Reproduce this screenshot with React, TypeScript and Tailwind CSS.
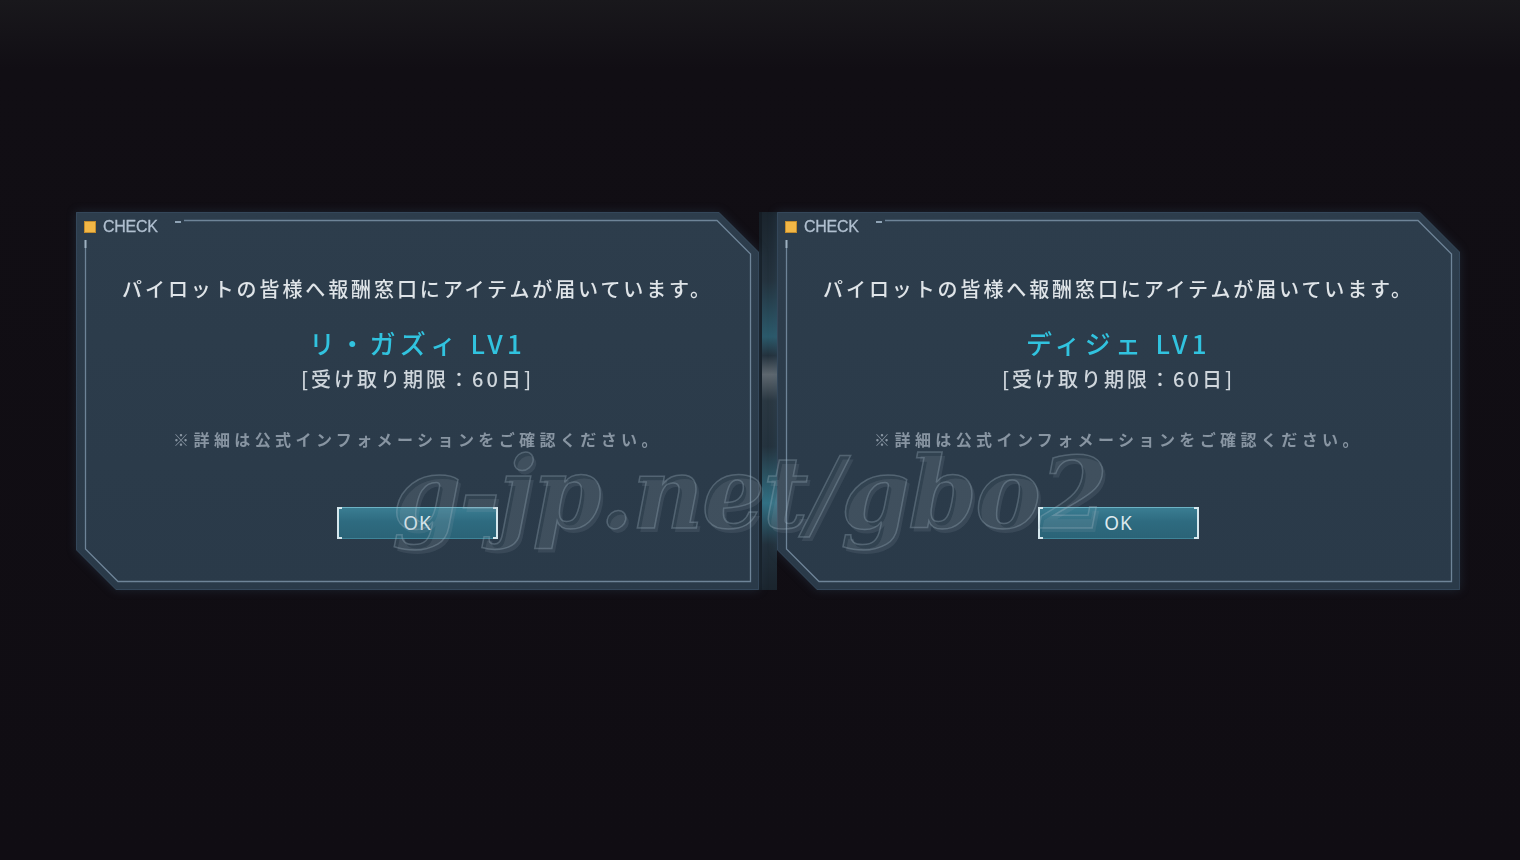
import React from "react";

const JP = "font-['Noto_Sans_CJK_JP','Noto_Sans',sans-serif]";

function Frame() {
  const W = 683;
  const H = 378;
  return (
    <svg
      className="absolute inset-0 pointer-events-none"
      width={W}
      height={H}
      viewBox={`0 0 ${W} ${H}`}
    >
      <polygon
        points={`0.5,0.5 ${W - 40},0.5 ${W - 0.5},40 ${W - 0.5},${H - 0.5} 40,${H - 0.5} 0.5,${H - 40}`}
        fill="none"
        stroke="#34475a"
        strokeWidth="1"
      />
      <polyline
        points={`108,8.5 ${W - 42},8.5 ${W - 8.5},42 ${W - 8.5},${H - 8.5} 42,${H - 8.5} 9.5,${H - 41} 9.5,36`}
        fill="none"
        stroke="#6e8498"
        strokeWidth="1.3"
      />
      <line x1="99" y1="10" x2="105" y2="10" stroke="#8fa3b5" strokeWidth="2" />
      <line x1="9.5" y1="28" x2="9.5" y2="36" stroke="#9fb2c2" strokeWidth="2" />
    </svg>
  );
}

function OkButton() {
  return (
    <div className="relative w-[161px] h-[32px] bg-[linear-gradient(180deg,#3a7d92_0%,#2e6b80_45%,#2b6377_100%)] border-t border-[#6db2c4] border-b border-b-[#3f8498] flex items-center justify-center">
      <div className="absolute left-0 top-[-1px] bottom-[-1px] w-[5px] border-l-2 border-t-2 border-b-2 border-[#d6e8ee]" />
      <div className="absolute right-0 top-[-1px] bottom-[-1px] w-[5px] border-r-2 border-t-2 border-b-2 border-[#d6e8ee]" />
      <span className="font-['Noto_Sans','Liberation_Sans',sans-serif] text-[19px] leading-none text-[#dde9ee] tracking-[1px]">
        OK
      </span>
    </div>
  );
}

function Panel({ name }: { name: string }) {
  return (
    <div className="[filter:drop-shadow(0_0_5px_rgba(55,90,115,0.3))]">
      <div className="relative w-[683px] h-[378px] bg-[linear-gradient(180deg,#2d3d4c_0%,#2a3a49_100%)] [clip-path:polygon(0_0,643px_0,683px_40px,683px_378px,40px_378px,0_338px)]">
        <Frame />
        <div className="absolute left-[8px] top-[7px] flex items-center gap-[7px]">
          <div className="w-[12px] h-[12px] bg-[#f2b746] border border-[#c38d2e]" />
          <span className="font-['Liberation_Sans',sans-serif] text-[16px] leading-none text-[#b0bfcf] tracking-[-0.3px] [-webkit-text-stroke:0.3px_#b0bfcf]">
            CHECK
          </span>
        </div>
        <div className={`relative flex flex-col items-center pt-[63px] ${JP}`}>
          <div className="text-[20px] leading-[28px] tracking-[2.9px] text-[#dfe4e8] font-medium">
            パイロットの皆様へ報酬窓口にアイテムが届いています。
          </div>
          <div className="mt-[22px] text-[26px] leading-[36px] tracking-[4.3px] text-[#31c3df] font-medium">
            {name}
          </div>
          <div className="mt-[4px] text-[20px] leading-[28px] tracking-[3px] text-[#cfd6dc] font-medium">
            [受け取り期限：60日]
          </div>
          <div className="mt-[34px] text-[16px] leading-[24px] tracking-[4.4px] text-[#8895a2] font-bold">
            ※詳細は公式インフォメーションをご確認ください。
          </div>
          <div className="mt-[56px]">
            <OkButton />
          </div>
        </div>
      </div>
    </div>
  );
}

export default function App() {
  return (
    <div className="relative w-[1520px] h-[860px] overflow-hidden bg-[linear-gradient(180deg,#19181c_0%,#110e14_8%,#100d13_100%)]">
      <div className="flex pt-[212px] pl-[76px]">
        <Panel name="リ・ガズィ LV1" />
        <div className="w-[18px] h-[378px] bg-[linear-gradient(180deg,#1a242d_0%,#24323d_18%,#2b5a6b_33%,#24323d_38%,#5f686f_43%,#2a3741_50%,#24323d_62%,#327184_77%,#22303b_88%,#1a242d_100%)] border-l-[3px] border-[#151d25]" />
        <Panel name="ディジェ LV1" />
      </div>
      <div className="absolute left-[392px] top-[444px] font-['DejaVu_Serif',serif] font-bold italic text-[99px] leading-none tracking-[-2px] text-[rgba(200,215,225,0.05)] [-webkit-text-stroke:1.5px_rgba(165,185,200,0.3)] [text-shadow:3px_4px_0_rgba(150,165,178,0.14)] pointer-events-none select-none">
        g-jp.net/gbo2
      </div>
    </div>
  );
}
